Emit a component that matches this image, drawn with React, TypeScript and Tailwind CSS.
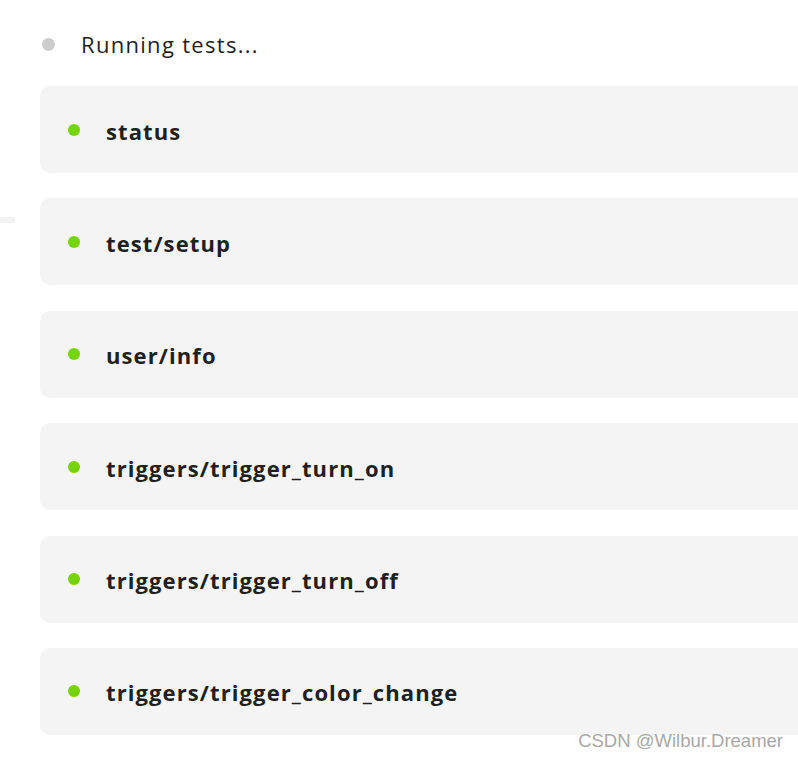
import React from "react";

const tests = [
  "status",
  "test/setup",
  "user/info",
  "triggers/trigger_turn_on",
  "triggers/trigger_turn_off",
  "triggers/trigger_color_change",
];

const App = () => {
  return (
    <div
      className="relative w-[798px] h-[758px] overflow-hidden bg-white text-[#1f1f1f]"
      style={{ fontFamily: "'Open Sans', 'Noto Sans', sans-serif" }}
    >
      {/* bit of the sidebar peeking in on the left */}
      <div className="absolute left-0 top-[217px] w-[15px] h-[6px] bg-[#f3f3f3]" />

      <div className="pl-[40px] pt-[30px]">
        <div className="flex items-center h-[28px]">
          <span className="ml-[2px] w-[13px] h-[13px] rounded-full bg-[#cccccc]" />
          <span className="ml-[26px] text-[22px] leading-[28px] tracking-[1.3px]">Running tests...</span>
        </div>

        <div className="mt-[28px] flex flex-col gap-[25.4px]">
          {tests.map((name) => (
            <div
              key={name}
              className="flex items-center h-[87px] w-[800px] rounded-l-[10px] bg-[#f4f4f4]"
            >
              <span className="ml-[28px] w-[12px] h-[12px] rounded-full bg-[#76d304]" />
              <span className="ml-[26px] mt-[2px] text-[22px] font-bold leading-[28px] tracking-[1.1px]">
                {name}
              </span>
            </div>
          ))}
        </div>
      </div>

      <div
        className="absolute right-[15px] bottom-[3px] text-[18.5px] text-[#a8a8a8]"
        style={{ fontFamily: "'Liberation Sans', Arial, sans-serif" }}
      >
        CSDN @Wilbur.Dreamer
      </div>
    </div>
  );
};

export default App;
